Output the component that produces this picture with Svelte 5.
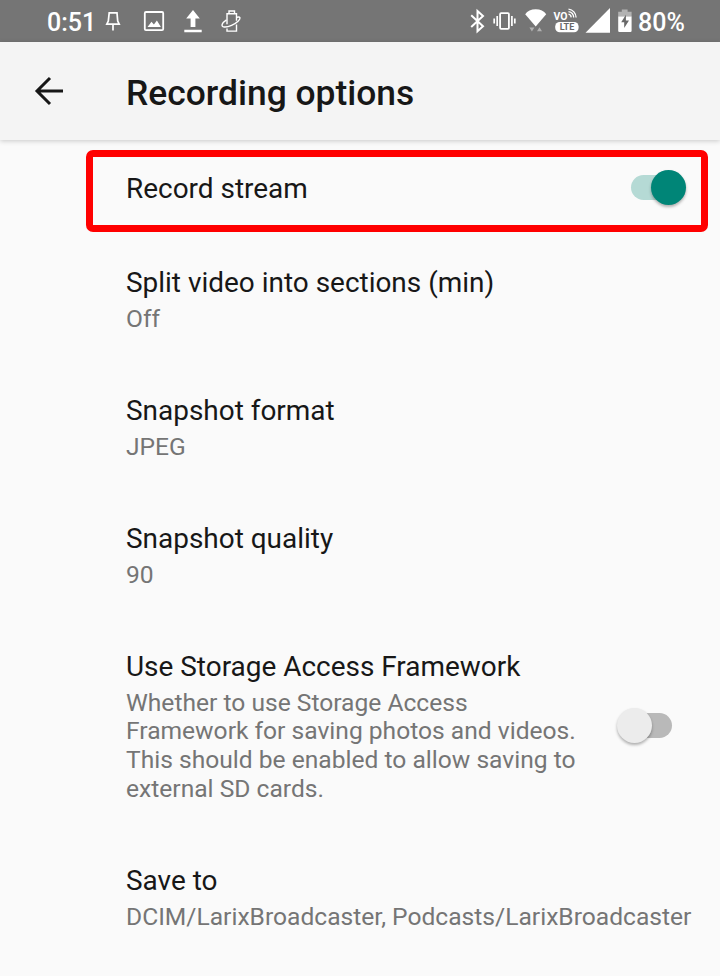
<script>
  const settings = [
    { title: 'Split video into sections (min)', lines: ['Off'] },
    { title: 'Snapshot format', lines: ['JPEG'] },
    { title: 'Snapshot quality', lines: ['90'] },
    {
      title: 'Use Storage Access Framework',
      lines: [
        'Whether to use Storage Access',
        'Framework for saving photos and videos.',
        'This should be enabled to allow saving to',
        'external SD cards.'
      ],
      toggle: true
    },
    { title: 'Save to', lines: ['DCIM/LarixBroadcaster, Podcasts/LarixBroadcaster'] }
  ];
</script>

<div class="screen">
  <div class="status">
    <span class="clock">0:51</span>
    <svg class="left-icons" width="144" height="42" viewBox="100 0 144 42" fill="none" stroke="#fff" stroke-width="1.5">
      <path d="M109.2 12.9h7.8l.7 8.1 1.5 3.1h-12.4l1.5-3.1zM113 24v6.5" stroke-width="1.7" />
      <rect x="144.8" y="12" width="18.4" height="18.2" rx="1.2" stroke-width="1.8" />
      <path d="M147.5 27l4-5.2 2.4 2.7 3-4.1 4 6.6z" fill="#fff" stroke="none" />
      <path d="M193 10l-6.8 8.5h4.4V27h4.8v-8.5h4.4zM184.3 29.8h17.4v2.5h-17.4z" fill="#fff" stroke="none" />
      <path d="M227 24.3V13.8h9.5v7M236.5 24.5v6.6H227v-2.6M229 13.5V11h5.5v2.5" stroke-width="1.4" />
      <path d="M226.5 19.8c-4.5 2.9-6.2 6.8-2.3 7.2 4.2.4 10.8-2.9 13.9-5.8 3.1-3 2.3-4.8-1.2-4" stroke-width="1.4" />
    </svg>
    <svg class="right-icons" width="172" height="42" viewBox="465 0 172 42" fill="none" stroke="#fff">
      <path d="M471.2 15.2l11.8 11-5.5 5V10.9l5.5 5-11.8 11" stroke-width="2" />
      <rect x="500.1" y="13.2" width="8.8" height="15.6" rx="1" stroke-width="1.8" />
      <path d="M497.2 16v10M494.2 18.5v5M511.9 16v10M514.8 18.5v5" stroke-width="1.7" />
      <path d="M525.2 14.2c2.2-3.2 5.9-4.9 10.5-4.9s8.3 1.7 10.5 4.9L535.7 26.5z" fill="#fff" stroke="none" />
      <path d="M529.4 27.6h5l-2.5 4zM537 31.3h5l-2.5-4z" fill="#b1b1b1" stroke="none" />
      <text class="vo" x="567.4" y="20.3" text-anchor="end" textLength="14" lengthAdjust="spacingAndGlyphs">VO</text>
      <path d="M568.5 14.2c1.5.3 2.6 1.6 2.7 3.2M568.5 11.6c3 .4 5.1 2.8 5.2 6M568.5 9.1c4.4.4 7.5 4.1 7.6 8.5" stroke-width="1.3" />
      <rect x="555.2" y="22" width="23.4" height="10.2" rx="4.5" fill="#fff" stroke="none" />
      <text class="lte" x="567" y="30.2">LTE</text>
      <path d="M585.5 32.8L610 8v24.8z" fill="#fff" stroke="none" />
      <path d="M621.8 9.4h5.8v2.4h4v5h-13.4v-5h3.6z" fill="#b3b3b3" stroke="none" />
      <path d="M618.2 16.5h13.4v14.3q0 1.2-1.2 1.2h-11q-1.2 0-1.2-1.2z" fill="#fff" stroke="none" />
      <path d="M625.9 14.8l-4.7 7.5h3v5.8l4.8-7.7h-3.1z" fill="#686868" stroke="none" />
    </svg>
    <span class="battery">80%</span>
  </div>

  <header>
    <svg class="back" width="32" height="32" viewBox="0 0 32 32" fill="none" stroke="#171717" stroke-width="3">
      <path d="M30 16H4M17 3L4 16l13 13" />
    </svg>
    <h1>Recording options</h1>
  </header>

  <main>
    <section class="record">
      <h2>Record stream</h2>
      <span class="switch on"><i></i></span>
    </section>
    {#each settings as item}
      <section class="setting">
        <div>
          <h2>{item.title}</h2>
          {#each item.lines as line}
            <p>{line}</p>
          {/each}
        </div>
        {#if item.toggle}<span class="switch off"><i></i></span>{/if}
      </section>
    {/each}
  </main>
</div>

<style>
  :global(body) { margin: 0; background: #fafafa; }
  .screen {
    width: 720px;
    height: 976px;
    overflow: hidden;
    background: #fafafa;
    font-family: Roboto, sans-serif;
    color: #171717;
  }
  .status {
    box-sizing: border-box;
    height: 42px;
    display: flex;
    align-items: center;
    background: #757575;
    color: #fff;
    padding-left: 47px;
  }
  .clock, .battery { font-size: 25px; line-height: 40px; font-weight: 500; padding-top: 3px; height: 39px; }
  .clock { width: 53px; }
  .right-icons { margin-left: 221px; }
  .battery { margin-left: 1px; }
  svg { flex: none; display: block; }
  text { font-family: Roboto, sans-serif; stroke: none; font-weight: 500; }
  .vo { font-size: 11.5px; fill: #fff; font-weight: 700; }
  .lte { font-size: 9px; fill: #686868; font-weight: 700; text-anchor: middle; }
  header {
    position: relative;
    box-sizing: border-box;
    height: 98px;
    display: flex;
    align-items: center;
    background: #f4f4f4;
    padding: 4px 0 0 33px;
    box-shadow: 0 1px 5px rgba(0, 0, 0, .2);
  }
  .back { margin-top: -4px; }
  h1, h2, p { margin: 0; white-space: nowrap; }
  h1 { margin-left: 61px; font-size: 35.4px; line-height: 43px; font-weight: 500; }
  h2 { font-size: 27.95px; line-height: 36px; font-weight: 400; }
  p { font-size: 24.6px; line-height: 28.67px; color: #757575; }
  main { padding: 10px 12px 0 86px; }
  .record {
    box-sizing: border-box;
    height: 82px;
    border: 7px solid #f00;
    border-radius: 7px;
    padding: 0 15px 5px 33px;
    display: flex;
    align-items: center;
    justify-content: space-between;
  }
  .setting {
    display: flex;
    align-items: center;
    justify-content: space-between;
    padding: 33px 36px 26.73px 40px;
  }
  .setting h2 { margin-bottom: 3.6px; }
  .switch { flex: none; display: flex; align-items: center; width: 55px; height: 35px; }
  .switch::before { content: ''; width: 41px; height: 25px; border-radius: 13px; }
  .switch i { width: 35px; height: 35px; border-radius: 50%; box-shadow: 0 2px 3px rgba(0, 0, 0, .3); }
  .on { margin-bottom: 3px; }
  .on::before { background: #b5dad5; }
  .on i { margin-left: -21px; background: #008577; position: relative; }
  .off { flex-direction: row-reverse; margin-bottom: 2px; }
  .off::before { background: #b9b9b9; }
  .off i { margin-right: -21px; background: #ececec; position: relative; }
</style>
